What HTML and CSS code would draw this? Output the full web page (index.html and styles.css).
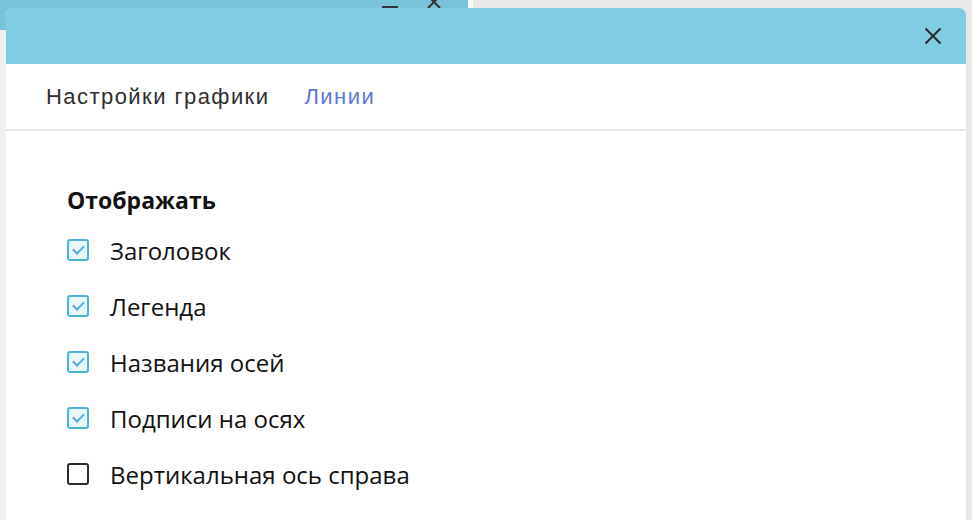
FILE: index.html
```html
<!DOCTYPE html>
<html lang="ru">
<head>
  <meta charset="UTF-8" />
  <meta name="viewport" content="width=device-width, initial-scale=1" />
  <title>Настройки графики</title>
  <link rel="stylesheet" href="styles.css">
</head>
<body>

<div class="back-window">
  <span class="back-min"></span>
  <svg class="back-close" width="16" height="16" viewBox="0 0 16 16"><path d="M2 2 L14 14 M14 2 L2 14" stroke="#333" stroke-width="2" fill="none"/></svg>
</div>

<div class="modal">
  <header class="modal-head">
    <button class="modal-close" aria-label="Закрыть">
      <svg width="18" height="18" viewBox="0 0 18 18"><path d="M1.5 1.5 L16.5 16.5 M16.5 1.5 L1.5 16.5" stroke="#2b2b2b" stroke-width="2" fill="none"/></svg>
    </button>
  </header>

  <nav class="tabs">
    <a class="tab" href="#">Настройки графики</a>
    <a class="tab active" href="#">Линии</a>
  </nav>

  <section class="options">
    <h3>Отображать</h3>
    <label class="opt"><span class="box checked"></span>Заголовок</label>
    <label class="opt"><span class="box checked"></span>Легенда</label>
    <label class="opt"><span class="box checked"></span>Названия осей</label>
    <label class="opt"><span class="box checked"></span>Подписи на осях</label>
    <label class="opt"><span class="box"></span>Вертикальная ось справа</label>
  </section>
</div>

</body>
</html>
```

FILE: styles.css
```css
body {
  margin: 0;
  height: 520px;
  overflow: hidden;
  background: #e8e8e8;
  position: relative;
  font-family: "Open Sans", "Noto Sans", sans-serif;
  color: #111;
}
/* окно позади модалки */
.back-window {
  position: absolute;
  left: 0;
  top: 0;
  width: 468px;
  height: 520px;
  background: #f0f0f0;
  border-right: 5px solid #f7f7f7;
}
.back-window::before {
  content: "";
  position: absolute;
  left: 0;
  top: 0;
  right: 0;
  height: 30px;
  background: #78c2da;
}
.back-min {
  position: absolute;
  left: 382px;
  top: 6px;
  width: 16px;
  height: 2px;
  background: #333;
}
.back-close {
  position: absolute;
  left: 426px;
  top: -6px;
}
.modal {
  position: relative;
  margin: 8px 6px 0;
  height: 512px;
  background: #fff;
  border-radius: 7px 7px 0 0;
  overflow: hidden;
}
.modal-head {
  height: 56px;
  background: #7fcce3;
  display: flex;
  align-items: center;
  justify-content: flex-end;
  padding-right: 24px;
}
.modal-close {
  background: none;
  border: none;
  padding: 0;
  width: 18px;
  height: 18px;
  cursor: pointer;
  display: block;
}
.tabs {
  height: 64px;
  display: flex;
  align-items: center;
  gap: 35px;
  padding: 1px 0 0 40px;
  border-bottom: 2px solid #e6e6ea;
  font-family: "Liberation Sans", Arial, sans-serif;
  font-size: 22px;
  letter-spacing: 1.45px;
}
.tab {
  color: #2e2e2e;
  text-decoration: none;
}
.tab.active {
  color: #5b78d6;
}
.options {
  padding: 49px 0 0 61px;
}
.options h3 {
  margin: 0 0 2px;
  font-size: 23px;
  font-weight: 700;
  line-height: 40px;
}
.opt {
  display: flex;
  align-items: center;
  height: 56px;
  font-size: 24px;
  gap: 21px;
}
.box {
  width: 22px;
  height: 22px;
  box-sizing: border-box;
  border: 2px solid #2c2c2c;
  border-radius: 3px;
  display: flex;
  align-items: center;
  justify-content: center;
}
.box.checked {
  border-color: #4db4d8;
  background: #e9f6fb;
}
.box.checked::after {
  content: "";
  width: 9px;
  height: 5px;
  border-left: 2.5px solid #4db4d8;
  border-bottom: 2.5px solid #4db4d8;
  transform: translateY(-2px) rotate(-45deg);
}
```
